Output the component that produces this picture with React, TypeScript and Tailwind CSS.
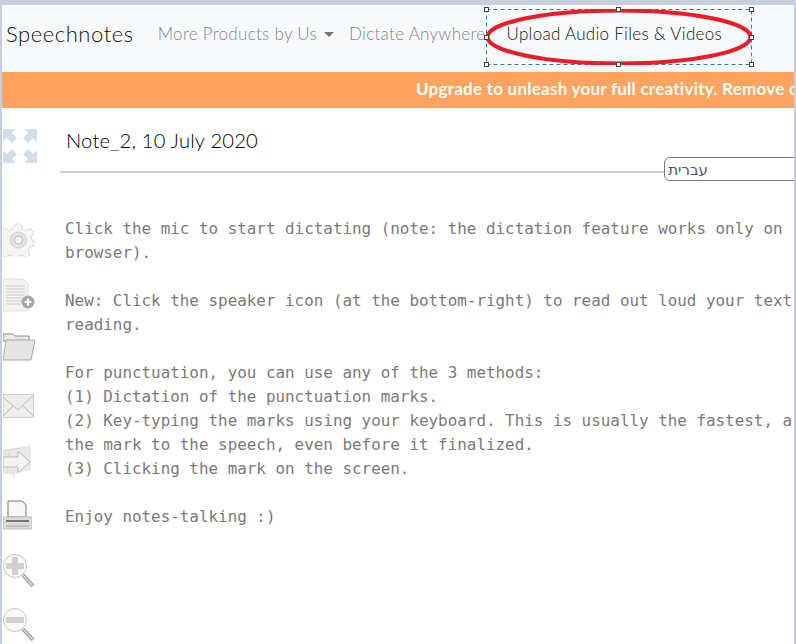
import React from 'react';

const gothic = 'font-["Lato",sans-serif]';

const noteLines = [
  'Click the mic to start dictating (note: the dictation feature works only on',
  'browser).',
  '',
  'New: Click the speaker icon (at the bottom-right) to read out loud your text',
  'reading.',
  '',
  'For punctuation, you can use any of the 3 methods:',
  '(1) Dictation of the punctuation marks.',
  '(2) Key-typing the marks using your keyboard. This is usually the fastest, a',
  'the mark to the speech, even before it finalized.',
  '(3) Clicking the mark on the screen.',
  '',
  'Enjoy notes-talking :)',
];

const ExpandIcon = () => (
  <svg width="34" height="34" viewBox="0 0 34 34" fill="#cfdeec">
    <path d="M0 0h13l-4 4 5 5-5 5-5-5-4 4z" />
    <path d="M34 0H21l4 4-5 5 5 5 5-5 4 4z" />
    <path d="M0 34h13l-4-4 5-5-5-5-5 5-4-4z" />
    <path d="M34 34H21l4-4-5-5 5-5 5 5 4-4z" />
  </svg>
);

const GearIcon = () => (
  <svg width="32" height="34" viewBox="0 0 32 34" fill="#f5f5f5" stroke="#c8c8c8">
    <path d="M13 1h5l1 5 4 2 4-3 4 4-3 5 1 3 2 1v5l-4 1-2 4 2 4-4 3-4-3-3 1-1 4h-5l-1-4-3-1-4 3-4-4 2-4-1-3-4-1v-5l4-1 1-4-2-4 4-4 4 3 3-2z" strokeDasharray="2 1" />
    <circle cx="15.500" cy="17" r="8" fill="#e2e2e2" stroke="#d0d0d0" />
    <circle cx="15.500" cy="17" r="4" fill="#f6f6f6" stroke="#bbb" />
  </svg>
);

const NewDocIcon = () => (
  <svg width="32" height="34" viewBox="0 0 32 34">
    <path d="M0 1h20l5 5v27H0z" fill="#f2f2f2" stroke="#e0e0e0" />
    <path d="M3 8h19M3 11h19M3 14h19M3 17h19M3 20h19M3 23h17M3 26h15" stroke="#cdcdcd" />
    <circle cx="25" cy="24" r="6.500" fill="#a6a6a6" />
    <path d="M25 20.500v7M21.500 24h7" stroke="#fff" strokeWidth="2" />
  </svg>
);

const FolderIcon = () => (
  <svg width="32" height="28" viewBox="0 0 32 28">
    <path d="M0 1h10l2 2h14v5H0z" fill="#e8e8e8" stroke="#8c8c8c" />
    <path d="M3 7h29l-4 20H0z" fill="#e4e4e4" stroke="#a8a8a8" />
  </svg>
);

const MailIcon = () => (
  <svg width="31" height="24" viewBox="0 0 31 24">
    <path d="M0 .5h30.500v23H0z" fill="#eeeeee" stroke="#cfcfcf" />
    <path d="M0 3l15 13L30.500 1M0 22l10-10M30.500 22 20 12" fill="none" stroke="#b8b8b8" />
  </svg>
);

const ShareIcon = () => (
  <svg width="30" height="34" viewBox="0 0 30 34">
    <path d="M0 5 28 0v25l-16 3v5l-4-4H0z" fill="#e8e8e8" />
    <path d="M0 6l18-3M6 6v6" stroke="#d2d2d2" fill="none" />
    <path d="M0 12h15V6l12 11-12 11v-6H0z" fill="#f3f3f3" stroke="#bdbdbd" />
  </svg>
);

const PrintIcon = () => (
  <svg width="29" height="30" viewBox="0 0 29 30">
    <path d="M5 1h14l4 4v12H5z" fill="#f6f6f6" stroke="#777" />
    <path d="M0 17h29v12H0z" fill="#dcdcdc" stroke="#bdbdbd" />
    <path d="M3 21h23" stroke="#777" strokeWidth="2" />
    <path d="M3 26h23" stroke="#a3a3a3" />
  </svg>
);

const ZoomIcon = ({ plus }: { plus?: boolean }) => (
  <svg width="32" height="36" viewBox="0 0 32 36">
    <circle cx="12" cy="13" r="11.500" fill="#f9f9f9" stroke="#c4c4c4" />
    <path d="M20 22l10 11" stroke="#a8a8a8" strokeWidth="4" />
    <path d="M20.500 22.500l9 10" stroke="#f2f2f2" />
    <path d="M3 13h18" stroke="#d0d0d0" strokeWidth="6" />
    {plus && <path d="M12 4v18" stroke="#d0d0d0" strokeWidth="6" />}
  </svg>
);

const Handle = ({ className }: { className: string }) => (
  <span className={`absolute h-[5px] w-[5px] border border-[#444] bg-white ${className}`} />
);

export default function App() {
  return (
    <div className="h-[644px] w-[796px] overflow-hidden border-x-2 border-t-[5px] border-[#c5cfe0] bg-white">
      <div className="relative h-full w-full overflow-hidden">
        {/* Top nav */}
        <nav className={`flex h-[67px] items-center whitespace-nowrap bg-[#f8f9fa] pb-[9px] font-light ${gothic}`}>
          <span className="ml-1 pb-[2px] text-[22px] tracking-[0.55px] text-[#111]">Speechnotes</span>
          <span className="ml-[24px] text-[17px] tracking-[0.3px] text-[#85858c]">More Products by Us</span>
          <span className="ml-[7px] h-0 w-0 border-x-[5px] border-t-[5px] border-x-transparent border-t-[#777]" />
          <span className="ml-[15px] text-[17px] tracking-[0.3px] text-[#85858c]">Dictate Anywhere</span>
          <span className="ml-[21px] text-[17px] tracking-[0.3px] text-[#111]">Upload Audio Files &amp; Videos</span>
        </nav>

        {/* Upgrade banner */}
        <div className="flex h-9 items-center overflow-hidden whitespace-nowrap bg-[#ffa460] pb-[2px] pl-[414px] font-['Lato',sans-serif] text-[17px] font-bold tracking-[0.25px] text-white">
          Upgrade to unleash your full creativity. Remove c
        </div>

        {/* Body */}
        <div className="flex">
          <aside className="flex w-[58px] shrink-0 flex-col items-start pl-[1px]">
            <div className="mt-[21px]"><ExpandIcon /></div>
            <div className="mt-[60px]"><GearIcon /></div>
            <div className="mt-[21px]"><NewDocIcon /></div>
            <div className="mt-[21px]"><FolderIcon /></div>
            <div className="mt-[33px]"><MailIcon /></div>
            <div className="mt-[27px]"><ShareIcon /></div>
            <div className="mt-[21px]"><PrintIcon /></div>
            <div className="mt-[23px]"><ZoomIcon plus /></div>
            <div className="mt-[18px]"><ZoomIcon /></div>
          </aside>

          <main className="min-w-0 flex-1">
            <div className="relative h-[65px] border-b-2 border-[#d0d0d0]">
              <h1 className="pl-[6px] pt-[18px] font-['Lato',sans-serif] text-[20.200px] font-light leading-7 tracking-[0.2px] text-[#000]">
                Note_2, 10 July 2020
              </h1>
              <div
                dir="rtl"
                className="absolute left-[604px] top-[49px] flex h-6 w-[140px] items-center rounded-l-md border border-[#777] bg-white font-['Noto_Sans','DejaVu_Sans',sans-serif] text-[15px] text-[#555]"
              >
                <span className="w-full pr-[95px]">עברית</span>
              </div>
            </div>
            <div className="whitespace-pre pl-[5px] pt-[44px] font-['DejaVu_Sans_Mono',monospace] text-[15.900px] leading-6 text-[#7a7a7a]">
              {noteLines.map((line, i) => (
                <div key={i} className="h-6">{line}</div>
              ))}
            </div>
          </main>
        </div>

        {/* Red ellipse annotation with selection handles */}
        <div className="absolute left-[484px] top-[4px] h-[56px] w-[266px]">
          <svg className="absolute inset-0" width="266" height="56" viewBox="0 0 266 56" fill="none">
            <rect x="0.500" y="0.500" width="265" height="55" stroke="#1a7fd0" strokeDasharray="4 3" />
            <ellipse cx="133" cy="28" rx="131.500" ry="26.500" stroke="#ed1c24" strokeWidth="4" />
          </svg>
          <Handle className="-left-[2px] -top-[2px]" />
          <Handle className="left-[130px] -top-[2px]" />
          <Handle className="-right-[2px] -top-[2px]" />
          <Handle className="-left-[2px] top-[26px]" />
          <Handle className="-right-[2px] top-[26px]" />
          <Handle className="-bottom-[2px] -left-[2px]" />
          <Handle className="-bottom-[2px] left-[130px]" />
          <Handle className="-bottom-[2px] -right-[2px]" />
        </div>
      </div>
    </div>
  );
}
